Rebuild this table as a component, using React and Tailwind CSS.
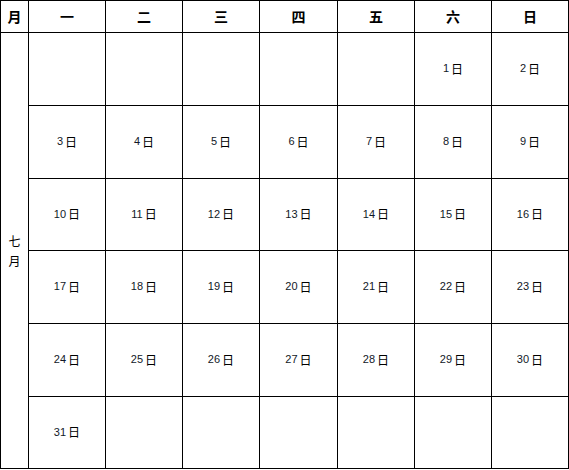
import React from "react";

const headers = ["一", "二", "三", "四", "五", "六", "日"];
const weeks = [
  [null, null, null, null, null, 1, 2],
  [3, 4, 5, 6, 7, 8, 9],
  [10, 11, 12, 13, 14, 15, 16],
  [17, 18, 19, 20, 21, 22, 23],
  [24, 25, 26, 27, 28, 29, 30],
  [31, null, null, null, null, null, null],
];

export default function App() {
  return (
    <div className="w-[569px] h-[470px] bg-white">
      <div className="grid gap-px bg-black p-px w-[569px] h-[469px] grid-cols-[27px_76px_76px_76px_77px_76px_76px_76px] grid-rows-[31px_72px_72px_71px_72px_72px_71px] text-black font-['Noto_Sans_CJK_SC',sans-serif]">
        <div className="bg-white flex items-center justify-center text-[14px] font-bold">月</div>
        {headers.map((h) => (
          <div key={h} className="bg-white flex items-center justify-center text-[14px] font-bold">
            {h}
          </div>
        ))}
        <div className="bg-white row-span-6 flex flex-col items-center justify-center text-[12px] leading-[20px]">
          <span>七</span>
          <span>月</span>
        </div>
        {weeks.flat().map((d, i) => (
          <div key={i} className="bg-white flex items-center justify-center pb-px">
            {d !== null && (
              <span className="flex items-center gap-[2px]">
                <span className="text-[11px] text-[#111827] font-['Liberation_Sans',sans-serif]">{d}</span>
                <span className="text-[12px]">日</span>
              </span>
            )}
          </div>
        ))}
      </div>
    </div>
  );
}
